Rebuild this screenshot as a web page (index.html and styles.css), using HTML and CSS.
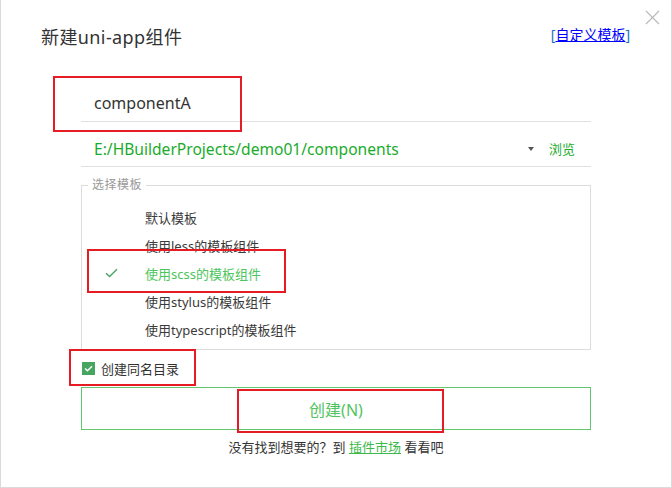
FILE: index.html
```html
<!DOCTYPE html>
<html lang="zh-CN">
<head>
<meta charset="utf-8">
<title>新建uni-app组件</title>
<link rel="stylesheet" href="styles.css">
</head>
<body>
<div class="window">
  <button class="close" aria-label="关闭">
    <svg width="15" height="15" viewBox="0 0 15 15"><path d="M1 1L14 14M14 1L1 14" stroke="#b8b8b8" stroke-width="1.1" fill="none"/></svg>
  </button>
  <div class="header">
    <h1 class="title">新建uni-app组件</h1>
    <span class="custom"><span class="bracket">[</span><a href="#" class="custom-link">自定义模板</a><span class="bracket">]</span></span>
  </div>
  <div class="form">
    <div class="name-row">componentA</div>
    <div class="path-row">
      <span class="path">E:/HBuilderProjects/demo01/components</span>
      <span class="arrow"></span>
      <span class="browse">浏览</span>
    </div>
    <fieldset class="templates">
      <legend class="legend">选择模板</legend>
      <div class="item"><span class="mark"></span><span>默认模板</span></div>
      <div class="item"><span class="mark"></span><span>使用less的模板组件</span></div>
      <div class="item selected"><span class="mark"><svg width="13" height="10" viewBox="0 0 13 10"><path d="M1 5.2L4.6 8.6L12 1.2" stroke="#4aa46a" stroke-width="1.4" fill="none"/></svg></span><span>使用scss的模板组件</span></div>
      <div class="item"><span class="mark"></span><span>使用stylus的模板组件</span></div>
      <div class="item"><span class="mark"></span><span>使用typescript的模板组件</span></div>
    </fieldset>
    <div class="check-row">
      <span class="checkbox"><svg width="9" height="7" viewBox="0 0 9 7"><path d="M1 3.5L3.4 5.8L8 1.2" stroke="#fff" stroke-width="1.4" fill="none"/></svg></span>
      <span class="check-label">创建同名目录</span>
    </div>
    <div class="create">创建(N)</div>
    <p class="hint">没有找到想要的？到 <a href="#" class="market">插件市场</a> 看看吧</p>
  </div>
  <div class="mark-box box-name"></div>
  <div class="mark-box box-scss"></div>
  <div class="mark-box box-check"></div>
  <div class="mark-box box-create"></div>
</div>
</body>
</html>
```
FILE: styles.css
```css
* { box-sizing: border-box; }
html, body { margin: 0; padding: 0; background: #fff; }
body { font-family: "Noto Sans", "Noto Sans CJK SC", sans-serif; color: #333; }

.window {
  position: relative;
  width: 672px;
  height: 488px;
  border-left: 1px solid #dadada;
  border-right: 1px solid #dadada;
  border-bottom: 1px solid #dadada;
  background: #fff;
}

.close {
  position: absolute;
  top: 10px;
  right: 11px;
  width: 15px;
  height: 15px;
  padding: 0;
  border: 0;
  background: none;
  line-height: 0;
}

.header {
  display: flex;
  justify-content: space-between;
  align-items: center;
  padding: 25px 41px 0 40px;
}
.title {
  margin: 0;
  font-size: 18px;
  font-weight: normal;
  line-height: 24px;
  letter-spacing: 0.4px;
  color: #333;
}
.custom { font-size: 14px; line-height: 18px; margin-top: -4px; }
.bracket { color: #1b74b8; }
.custom-link { color: #0000ff; text-decoration: underline; }

.form { margin: 36px 80px 0; }

.name-row {
  height: 37px;
  line-height: 36px;
  padding-left: 13px;
  font-size: 16px;
  color: #333;
  border-bottom: 1px solid #e0e0e0;
}

.path-row {
  display: flex;
  align-items: center;
  height: 45px;
  padding: 17px 16px 8px 13px;
  border-bottom: 1px solid #e0e0e0;
}
.path { flex: 1; font-size: 15.6px; line-height: 20px; color: #1aab2c; }
.arrow {
  width: 0;
  height: 0;
  border-left: 3px solid transparent;
  border-right: 3px solid transparent;
  border-top: 4px solid #555;
  margin-right: 15px;
}
.browse { font-size: 13px; line-height: 20px; color: #1aab2c; }

.templates {
  margin: 8px 0 0;
  padding: 8px 6px 6px;
  border: 1px solid #dcdcdc;
  min-width: 0;
}
.legend {
  padding: 0 4px;
  font-size: 12px;
  line-height: 20px;
  color: #999;
  letter-spacing: 0.5px;
}
.item {
  display: grid;
  grid-template-columns: 57px 1fr;
  align-items: center;
  height: 28px;
  font-size: 13px;
  color: #3a3a3a;
}
.item .mark { display: flex; align-items: center; padding-left: 17px; }
.item.selected { color: #4cc65c; }

.check-row {
  display: flex;
  align-items: center;
  height: 37px;
  padding-left: 1px;
}
.checkbox {
  display: flex;
  align-items: center;
  justify-content: center;
  width: 13px;
  height: 13px;
  background: #47a55f;
  margin-right: 6px;
}
.check-label { font-size: 13px; color: #333; }

.create {
  height: 43px;
  border: 1px solid #62c66f;
  display: flex;
  align-items: center;
  justify-content: center;
  font-size: 16px;
  color: #52c45f;
}

.hint {
  margin: 8px 0 0;
  text-align: center;
  font-size: 13px;
  line-height: 18px;
  color: #333;
}
.market { color: #3cb94a; text-decoration: underline; }

.mark-box {
  position: absolute;
  border: 2px solid #e51c23;
}
.box-name { left: 52px; top: 76px; width: 189px; height: 56px; }
.box-scss { left: 86px; top: 249px; width: 199px; height: 44px; }
.box-check { left: 68px; top: 349px; width: 127px; height: 37px; }
.box-create { left: 236px; top: 389px; width: 207px; height: 44px; }
```
